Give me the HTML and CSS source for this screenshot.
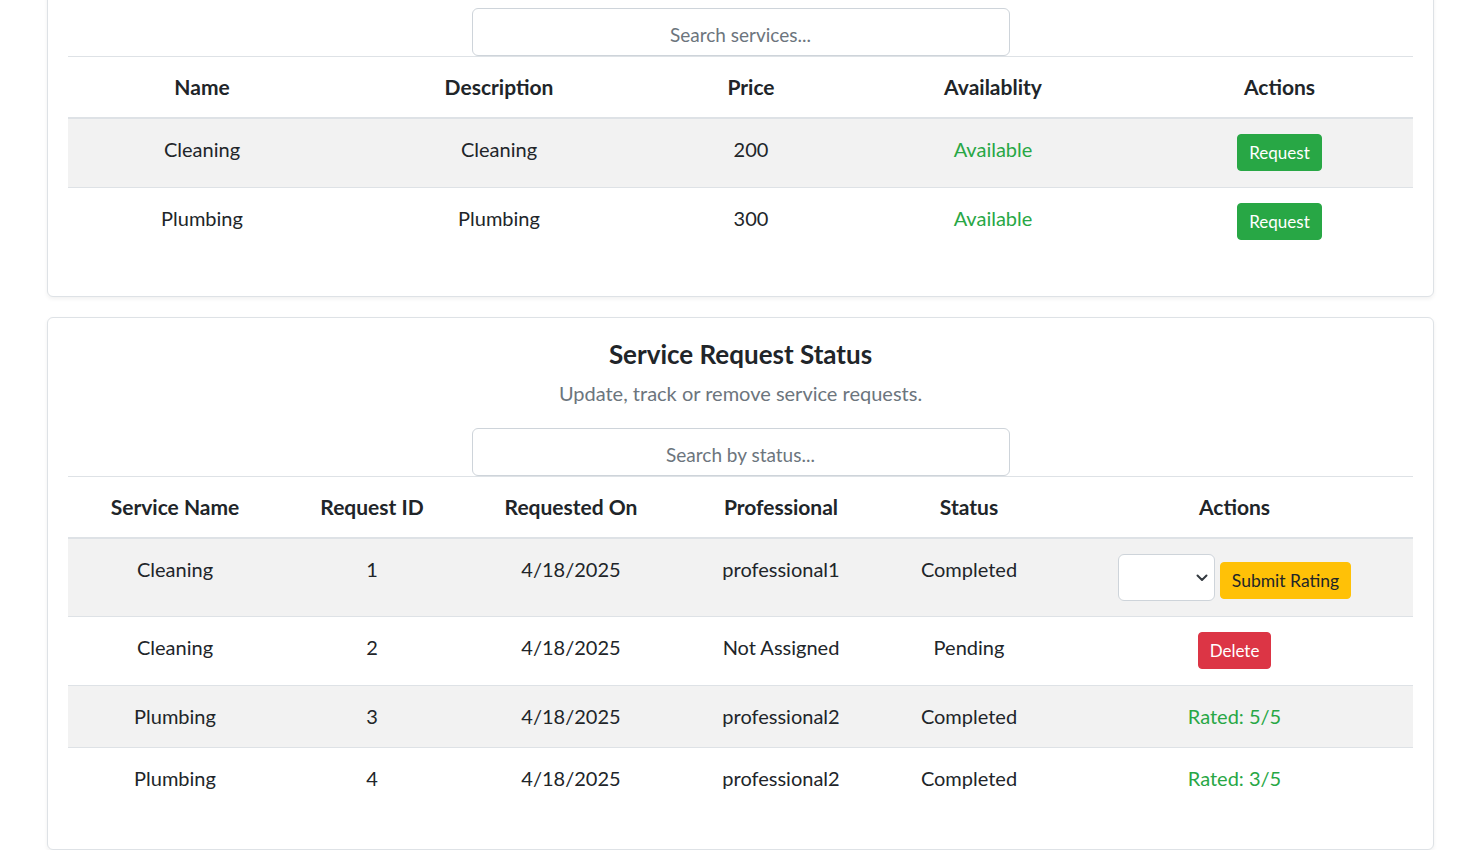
FILE: index.html
```html
<!DOCTYPE html>
<html>
<head>
<meta charset="utf-8">
<link rel="stylesheet" href="styles.css">
</head>
<body>
<div class="page">
  <section class="card card-first">
    <div class="search-wrap"><input class="search" type="text" placeholder="Search services..."></div>
    <table class="tbl tbl-services">
      <colgroup><col style="width:268px"><col style="width:326px"><col style="width:178px"><col style="width:306px"><col style="width:267px"></colgroup>
      <thead><tr><th>Name</th><th>Description</th><th>Price</th><th>Availablity</th><th>Actions</th></tr></thead>
      <tbody>
        <tr class="striped"><td>Cleaning</td><td>Cleaning</td><td>200</td><td class="ok">Available</td><td><button class="btn btn-success">Request</button></td></tr>
        <tr><td>Plumbing</td><td>Plumbing</td><td>300</td><td class="ok">Available</td><td><button class="btn btn-success">Request</button></td></tr>
      </tbody>
    </table>
  </section>

  <section class="card">
    <h3 class="title">Service Request Status</h3>
    <p class="subtitle">Update, track or remove service requests.</p>
    <div class="search-wrap"><input class="search" type="text" placeholder="Search by status..."></div>
    <table class="tbl tbl-requests">
      <colgroup><col style="width:214px"><col style="width:180px"><col style="width:218px"><col style="width:202px"><col style="width:174px"><col style="width:357px"></colgroup>
      <thead><tr><th>Service Name</th><th>Request ID</th><th>Requested On</th><th>Professional</th><th>Status</th><th>Actions</th></tr></thead>
      <tbody>
        <tr class="striped"><td>Cleaning</td><td>1</td><td>4/18/2025</td><td>professional1</td><td>Completed</td>
          <td><span class="select-wrap"><select class="rating"><option></option><option>1</option><option>2</option><option>3</option><option>4</option><option>5</option></select><svg class="chev" width="12" height="8" viewBox="0 0 12 8"><path d="M1.5 1.5 L6 6 L10.5 1.5" fill="none" stroke="#343a40" stroke-width="2" stroke-linecap="round" stroke-linejoin="round"/></svg></span><button class="btn btn-warning">Submit Rating</button></td></tr>
        <tr><td>Cleaning</td><td>2</td><td>4/18/2025</td><td>Not Assigned</td><td>Pending</td><td><button class="btn btn-danger">Delete</button></td></tr>
        <tr class="striped"><td>Plumbing</td><td>3</td><td>4/18/2025</td><td>professional2</td><td>Completed</td><td class="ok">Rated: 5/5</td></tr>
        <tr><td>Plumbing</td><td>4</td><td>4/18/2025</td><td>professional2</td><td>Completed</td><td class="ok">Rated: 3/5</td></tr>
      </tbody>
    </table>
  </section>
</div>
</body>
</html>
```

FILE: styles.css
```css
html, body {
  margin: 0;
  padding: 0;
  background: #ffffff;
}
body {
  font-family: "Lato", "Open Sans", sans-serif;
  font-size: 20px;
  color: #212529;
  overflow: hidden;
}
.page {
  padding: 0 43px 0 47px;
  display: flex;
  flex-direction: column;
  gap: 20px;
}
.card {
  background: #fff;
  border: 1px solid #dee2e6;
  border-radius: 6px;
  box-shadow: 0 2px 4px rgba(0, 0, 0, 0.06);
  padding: 20px;
}
.card-first {
  margin-top: -30px;
  padding-top: 37px;
}
.title {
  margin: 0;
  text-align: center;
  font-size: 26px;
  font-weight: 700;
  line-height: 32px;
  color: #212529;
}
.subtitle {
  margin: 9px 0 21px;
  text-align: center;
  color: #6c757d;
  font-size: 20px;
  line-height: 28px;
}
.search-wrap {
  display: flex;
  justify-content: center;
}
.search {
  width: 40%;
  height: 48px;
  box-sizing: border-box;
  border: 1px solid #ced4da;
  border-radius: 6px;
  font-family: inherit;
  font-size: 19px;
  text-align: center;
  color: #212529;
  padding: 4px 12px 0;
  outline: none;
}
.search::placeholder {
  color: #6c757d;
}
.tbl {
  width: 100%;
  border-collapse: collapse;
  table-layout: fixed;
  margin-bottom: 20px;
  text-align: center;
}
.tbl th {
  font-size: 21px;
  font-weight: 700;
  padding: 15px 8px 15px;
  line-height: 30px;
  border-top: 1px solid #dee2e6;
  border-bottom: 2px solid #dee2e6;
  vertical-align: top;
}
.tbl td {
  padding: 15px 8px 16px;
  line-height: 30px;
  border-top: 1px solid #dee2e6;
  vertical-align: top;
}
.tbl thead + tbody tr:first-child td {
  border-top: 0;
}
.striped td {
  background: #f2f2f2;
}
.ok {
  color: #28a745;
}
.btn {
  font-family: inherit;
  font-size: 17px;
  line-height: 23px;
  padding: 6px 11px;
  margin: 0;
  border: 1px solid transparent;
  border-radius: 4px;
  color: #fff;
  cursor: pointer;
  vertical-align: top;
}
.btn-success {
  background: #28a745;
  border-color: #28a745;
}
.btn-danger {
  background: #dc3545;
  border-color: #dc3545;
}
.btn-warning {
  background: #ffc107;
  border-color: #ffc107;
  color: #212529;
  font-size: 17.5px;
  margin-top: 8px;
  margin-left: 5px;
}
.select-wrap {
  position: relative;
  display: inline-block;
  vertical-align: top;
  margin: 0 0 -1px;
}
.rating {
  appearance: none;
  -webkit-appearance: none;
  width: 97px;
  height: 47px;
  border: 1px solid #ced4da;
  border-radius: 6px;
  background: #fff;
  font-family: inherit;
  font-size: 18px;
  padding: 0 30px 0 10px;
  display: block;
}
.chev {
  position: absolute;
  right: 7px;
  top: 20px;
  pointer-events: none;
}
```
